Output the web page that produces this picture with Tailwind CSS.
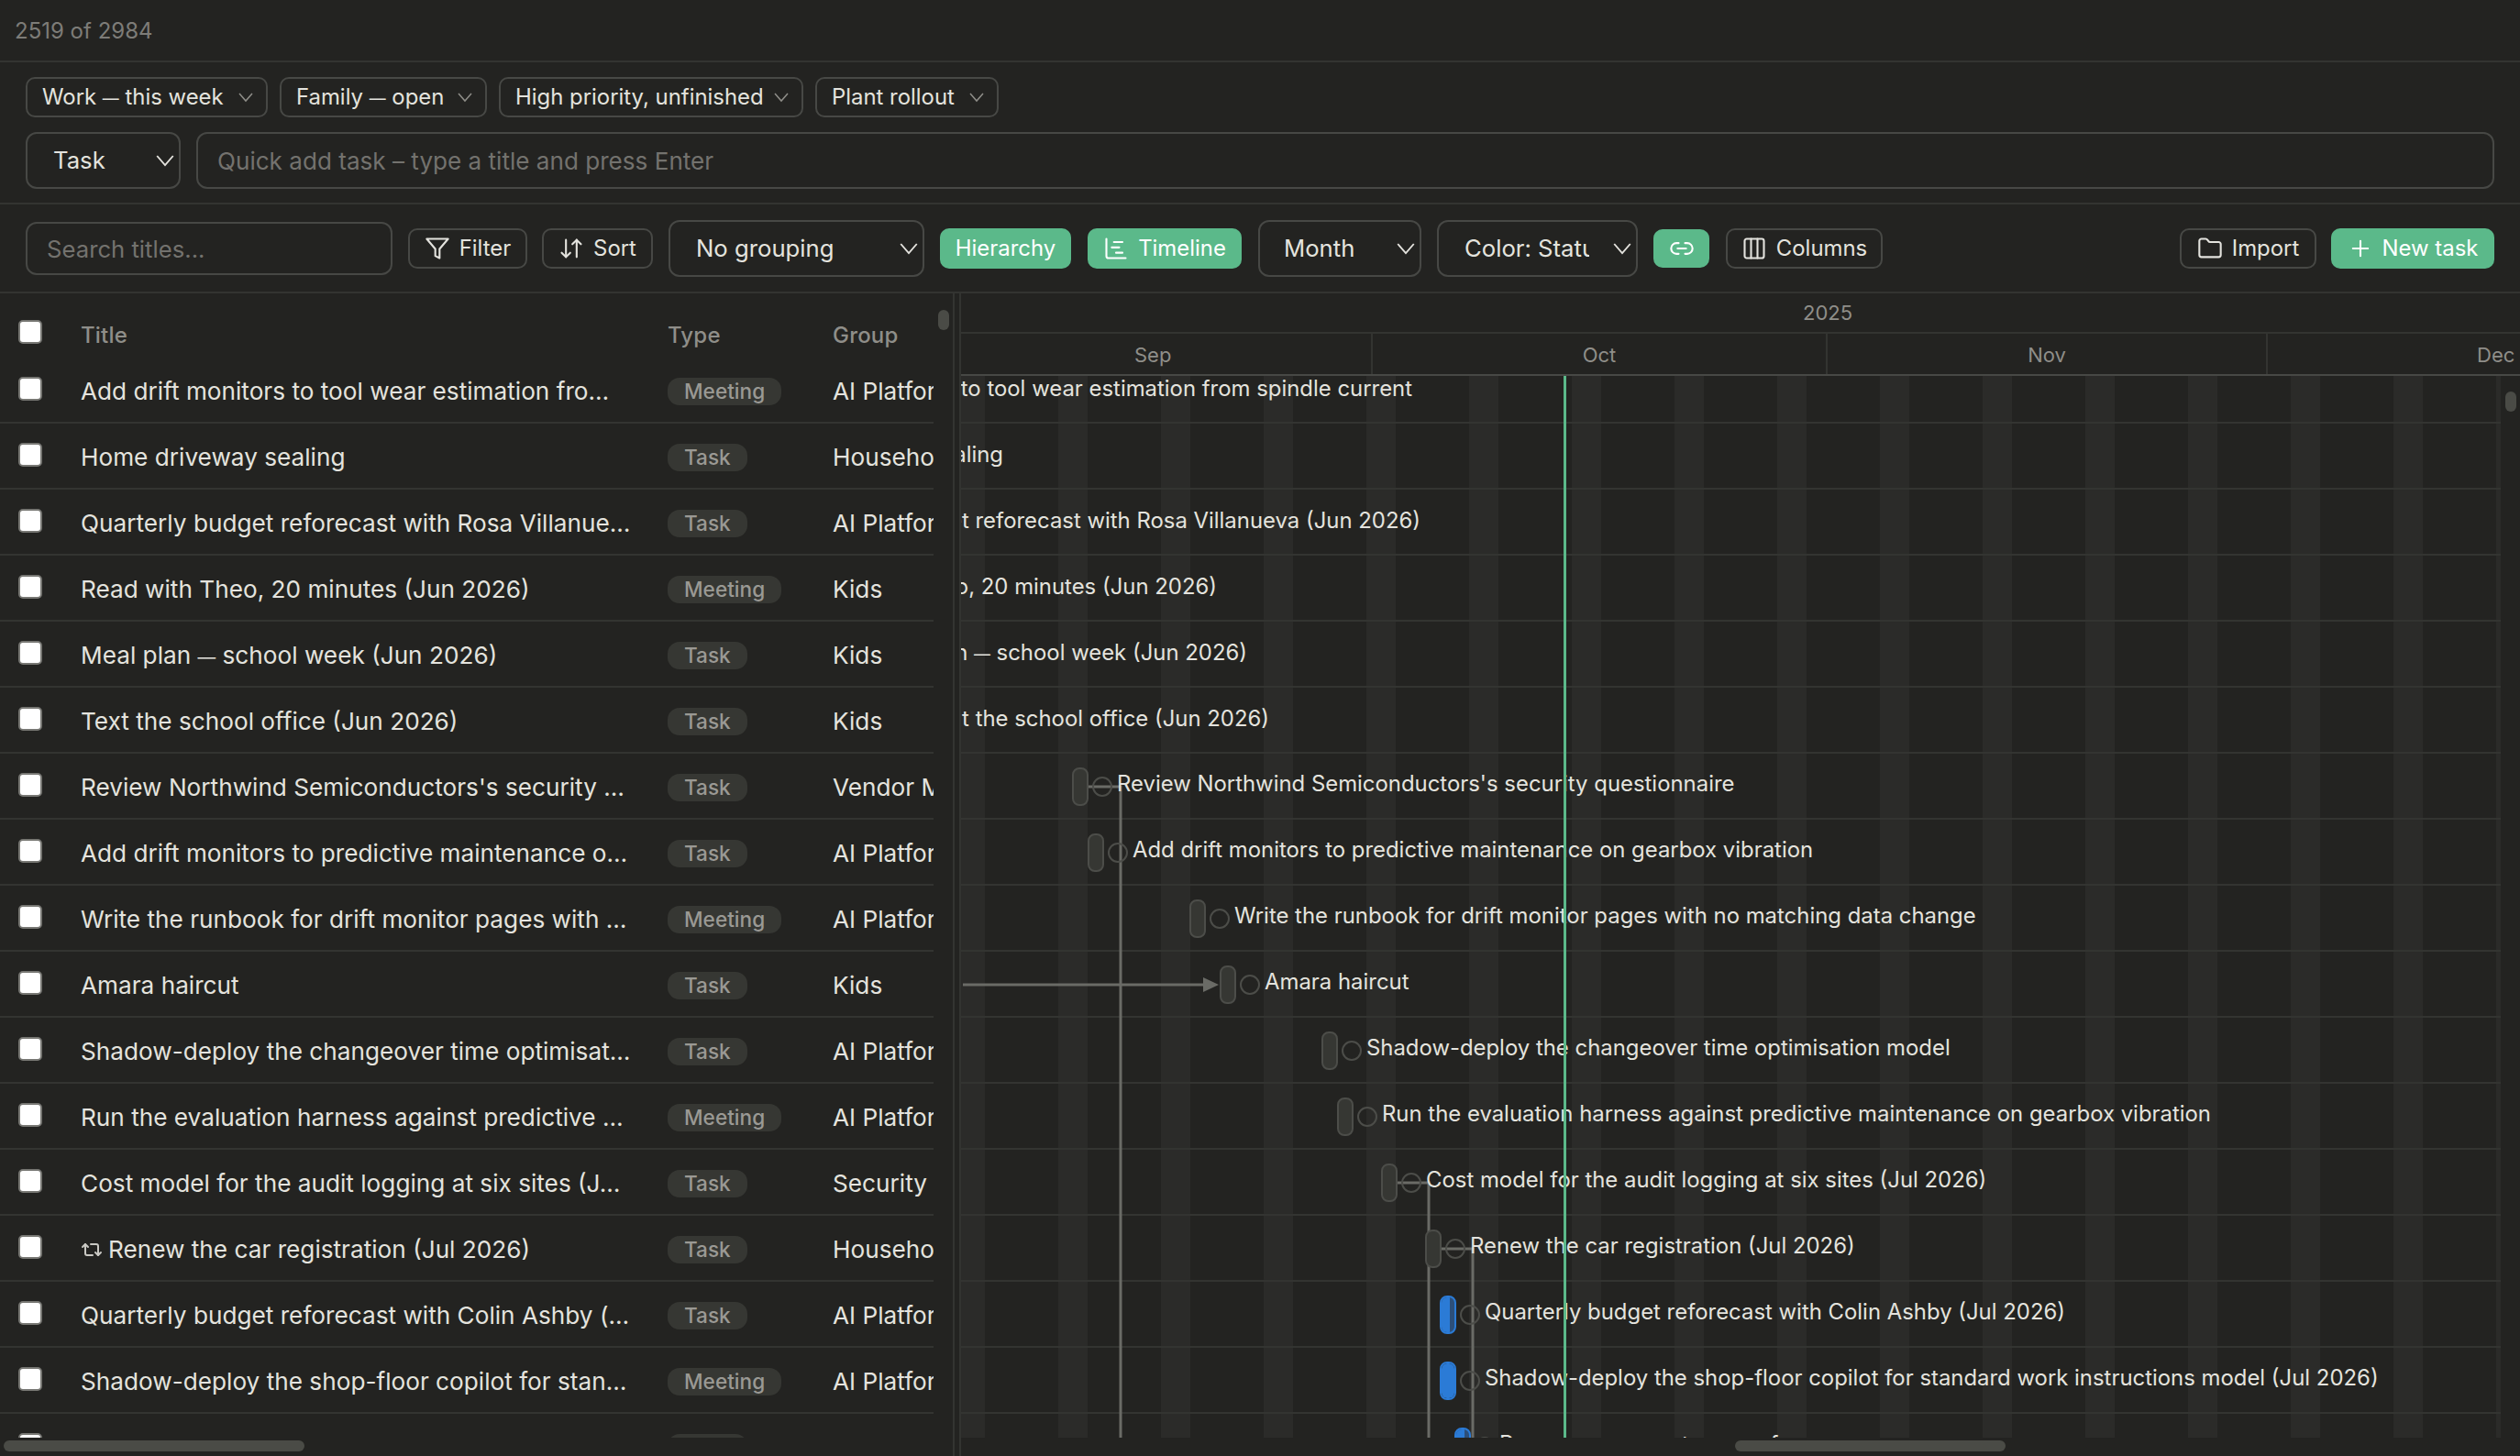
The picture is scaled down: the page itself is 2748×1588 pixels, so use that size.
<!DOCTYPE html>
<html lang="en">
<head>
<meta charset="UTF-8" />
<meta name="viewport" content="width=device-width, initial-scale=1.0" />
<title>Tasks</title>
<script src="https://cdn.jsdelivr.net/npm/@tailwindcss/browser@4"></script>
</head>
<body class="bg-[#232321] text-[#e4e3de] font-[family-name:Inter,sans-serif] h-[1588px] w-[2748px] overflow-hidden flex flex-col">

<!-- count -->
<div class="h-[68px] shrink-0 border-b-2 border-[#333431] pl-[16px] pt-[21px] text-[24px] leading-[26px] text-[#7d7c78]">2519 of 2984</div>

<!-- saved views + quick add -->
<div class="h-[155px] shrink-0 border-b-2 border-[#333431] px-[28px] pt-[16px]">
  <div class="flex gap-[13px]">
    <button class="h-[44px] w-[264px] flex items-center justify-between pl-[16px] pr-[10px] border-2 border-[#474845] rounded-[10px] text-[23.9px]"><span>Work <span class="text-[0.75em]">—</span> this week</span><svg class="w-[24px] h-[24px] text-[#8f8e89]" viewBox="0 0 24 24" fill="none" stroke="currentColor" stroke-width="1.5"><path d="m5 8 7 8 7-8"/></svg></button>
    <button class="h-[44px] w-[226px] flex items-center justify-between pl-[16px] pr-[10px] border-2 border-[#474845] rounded-[10px] text-[23.9px]"><span>Family <span class="text-[0.75em]">—</span> open</span><svg class="w-[24px] h-[24px] text-[#8f8e89]" viewBox="0 0 24 24" fill="none" stroke="currentColor" stroke-width="1.5"><path d="m5 8 7 8 7-8"/></svg></button>
    <button class="h-[44px] w-[332px] flex items-center justify-between pl-[16px] pr-[10px] border-2 border-[#474845] rounded-[10px] text-[23.9px]">High priority, unfinished<svg class="w-[24px] h-[24px] text-[#8f8e89]" viewBox="0 0 24 24" fill="none" stroke="currentColor" stroke-width="1.5"><path d="m5 8 7 8 7-8"/></svg></button>
    <button class="h-[44px] w-[200px] flex items-center justify-between pl-[16px] pr-[10px] border-2 border-[#474845] rounded-[10px] text-[23.9px]">Plant rollout<svg class="w-[24px] h-[24px] text-[#8f8e89]" viewBox="0 0 24 24" fill="none" stroke="currentColor" stroke-width="1.5"><path d="m5 8 7 8 7-8"/></svg></button>
  </div>
  <div class="flex gap-[17px] mt-[16px]">
    <div class="relative w-[169px] h-[62px] shrink-0">
      <select class="appearance-none w-full h-full bg-transparent border-2 border-[#474845] rounded-[12px] pl-[28px] pt-[1px] text-[25.7px]"><option>Task</option></select>
      <svg class="absolute right-[2px] top-[16px] w-[30px] h-[30px]" viewBox="0 0 24 24" fill="none" stroke="currentColor" stroke-width="1.5"><path d="m5 8 7 8 7-8"/></svg>
    </div>
    <input class="flex-1 h-[62px] bg-transparent border-2 border-[#474845] rounded-[12px] pl-[21px] text-[26.1px] placeholder:text-[#73726e]" placeholder="Quick add task – type a title and press Enter" />
  </div>
</div>

<!-- toolbar -->
<div class="h-[97px] shrink-0 border-b-2 border-[#333431] px-[28px] flex items-center">
  <input class="w-[400px] h-[58px] bg-transparent border-2 border-[#474845] rounded-[12px] pl-[21px] pt-[1px] text-[25.7px] placeholder:text-[#73726e]" placeholder="Search titles..." />
  <button class="ml-[17px] w-[130px] h-[44px] flex items-center justify-center gap-[10px] border-2 border-[#474845] rounded-[10px] text-[23.9px]"><svg class="w-[28px] h-[28px]" viewBox="0 0 24 24" fill="none" stroke="currentColor" stroke-width="1.8" stroke-linecap="round" stroke-linejoin="round"><polygon points="22 3 2 3 10 12.46 10 19 14 21 14 12.46 22 3"/></svg>Filter</button>
  <button class="ml-[16px] w-[121px] h-[44px] flex items-center justify-center gap-[10px] border-2 border-[#474845] rounded-[10px] text-[23.9px]"><svg class="w-[28px] h-[28px]" viewBox="0 0 24 24" fill="none" stroke="currentColor" stroke-width="1.8" stroke-linecap="round" stroke-linejoin="round"><path d="m3 16 4 4 4-4"/><path d="M7 20V4"/><path d="m21 8-4-4-4 4"/><path d="M17 4v16"/></svg>Sort</button>
  <div class="relative ml-[17px] w-[279px] h-[62px]">
    <select class="appearance-none w-full h-full bg-transparent border-2 border-[#474845] rounded-[12px] pl-[28px] pt-[1px] text-[25.7px]"><option>No grouping</option></select>
    <svg class="absolute right-[2px] top-[16px] w-[30px] h-[30px]" viewBox="0 0 24 24" fill="none" stroke="currentColor" stroke-width="1.5"><path d="m5 8 7 8 7-8"/></svg>
  </div>
  <button class="ml-[17px] w-[143px] h-[44px] rounded-[10px] bg-[#5bb98a] text-white text-[23.9px]">Hierarchy</button>
  <button class="ml-[18px] w-[168px] h-[44px] flex items-center justify-center gap-[10px] rounded-[10px] bg-[#5bb98a] text-white text-[23.9px]"><svg class="w-[28px] h-[28px]" viewBox="0 0 24 24" fill="none" stroke="currentColor" stroke-width="1.8" stroke-linecap="round" stroke-linejoin="round"><path d="M10 6h8"/><path d="M12 16h6"/><path d="M3 3v16a2 2 0 0 0 2 2h16"/><path d="M8 11h7"/></svg>Timeline</button>
  <div class="relative ml-[18px] w-[178px] h-[62px]">
    <select class="appearance-none w-full h-full bg-transparent border-2 border-[#474845] rounded-[12px] pl-[26px] pt-[1px] text-[25.7px]"><option>Month</option></select>
    <svg class="absolute right-[2px] top-[16px] w-[30px] h-[30px]" viewBox="0 0 24 24" fill="none" stroke="currentColor" stroke-width="1.5"><path d="m5 8 7 8 7-8"/></svg>
  </div>
  <div class="relative ml-[17px] w-[219px] h-[62px]">
    <select class="appearance-none w-full h-full bg-transparent border-2 border-[#474845] rounded-[12px] pl-[28px] pr-[51px] pt-[1px] text-[25.7px]"><option>Color: Status</option></select>
    <svg class="absolute right-[2px] top-[16px] w-[30px] h-[30px]" viewBox="0 0 24 24" fill="none" stroke="currentColor" stroke-width="1.5"><path d="m5 8 7 8 7-8"/></svg>
  </div>
  <button class="ml-[17px] w-[61px] h-[42px] flex items-center justify-center rounded-[10px] bg-[#5bb98a] text-white"><svg class="w-[28px] h-[28px]" viewBox="0 0 24 24" fill="none" stroke="currentColor" stroke-width="1.8" stroke-linecap="round" stroke-linejoin="round"><path d="M9 17H7A5 5 0 0 1 7 7h2"/><path d="M15 7h2a5 5 0 1 1 0 10h-2"/><line x1="8" x2="16" y1="12" y2="12"/></svg></button>
  <button class="ml-[18px] w-[171px] h-[44px] flex items-center justify-center gap-[10px] border-2 border-[#474845] rounded-[10px] text-[23.9px]"><svg class="w-[28px] h-[28px]" viewBox="0 0 24 24" fill="none" stroke="currentColor" stroke-width="1.8" stroke-linecap="round" stroke-linejoin="round"><rect width="18" height="18" x="3" y="3" rx="2"/><path d="M9 3v18"/><path d="M15 3v18"/></svg>Columns</button>
  <button class="ml-auto w-[149px] h-[44px] flex items-center justify-center gap-[10px] border-2 border-[#474845] rounded-[10px] text-[23.9px]"><svg class="w-[28px] h-[28px]" viewBox="0 0 24 24" fill="none" stroke="currentColor" stroke-width="1.8" stroke-linecap="round" stroke-linejoin="round"><path d="M20 20a2 2 0 0 0 2-2V8a2 2 0 0 0-2-2h-7.9a2 2 0 0 1-1.69-.9L9.6 3.9A2 2 0 0 0 7.93 3H4a2 2 0 0 0-2 2v13a2 2 0 0 0 2 2Z"/></svg>Import</button>
  <button class="ml-[16px] w-[178px] h-[44px] flex items-center justify-center gap-[10px] rounded-[10px] bg-[#5bb98a] text-white text-[23.9px]"><svg class="w-[28px] h-[28px]" viewBox="0 0 24 24" fill="none" stroke="currentColor" stroke-width="1.8" stroke-linecap="round" stroke-linejoin="round"><path d="M5 12h14"/><path d="M12 5v14"/></svg>New task</button>
</div>

<!-- table + gantt -->
<div class="flex-1 flex min-h-0">

  <!-- table pane -->
  <div class="relative w-[1041px] shrink-0 border-r-2 border-[#333431] flex flex-col">
    <div class="h-[70px] shrink-0 relative text-[24px] tracking-[0.2px] font-medium text-[#8f8e89]">
      <input type="checkbox" class="absolute left-[20px] top-[29px] appearance-none w-[26px] h-[26px] bg-white border-2 border-[#777773] rounded-[5px]" />
      <span class="absolute left-[88px] top-[28px]">Title</span>
      <span class="absolute left-[728px] top-[28px]">Type</span>
      <span class="absolute left-[908px] top-[28px]">Group</span>
    </div>
    <div id="tableRows" class="w-[1018px] flex-1 overflow-hidden"></div>
    <div class="h-[20px] shrink-0 pl-[4px] pt-[3px]"><div class="w-[328px] h-[12px] rounded-full bg-[#4a4b46]"></div></div>
    <div class="absolute left-[1023px] top-[18px] w-[12px] h-[22px] rounded-full bg-[#4a4b46]"></div>
  </div>

  <!-- resize handle -->
  <div class="w-[7px] shrink-0 border-r-2 border-[#333431]"></div>

  <!-- gantt pane -->
  <div class="relative flex-1 min-w-0 flex flex-col">
    <div class="h-[44px] shrink-0 border-b-2 border-[#333431] text-[22px] leading-[26px] pt-[8px] pl-[918px] text-[#8f8e89]">2025</div>
    <div class="h-[46px] shrink-0 border-b-2 border-[#474845] flex text-[22px] text-[#8f8e89] text-center">
      <div class="w-[449px] shrink-0 border-r-2 border-[#333431] pt-[7px] pl-[189px] text-left">Sep</div>
      <div class="w-[496px] shrink-0 border-r-2 border-[#333431] pt-[7px]">Oct</div>
      <div class="w-[480px] shrink-0 border-r-2 border-[#333431] pt-[7px]">Nov</div>
      <div class="flex-1 min-w-0 pt-[7px] pl-[228px] text-left whitespace-nowrap">Dec</div>
    </div>
    <div class="relative flex-1 min-h-0 flex">
      <div id="chart" class="relative w-[1679px] h-full overflow-hidden"></div>
    </div>
    <div class="h-[20px] shrink-0 pl-[844px] pt-[3px]"><div class="w-[295px] h-[12px] rounded-full bg-[#4a4b46]"></div></div>
    <div class="absolute left-[1684px] top-[107px] w-[12px] h-[22px] rounded-full bg-[#4a4b46]"></div>
  </div>
</div>

<script>
// title, type, group, bar x, label right edge when the bar is scrolled off, fill width
const ROWS = [
  {t:'Add drift monitors to tool wear estimation fro…', full:'Add drift monitors to tool wear estimation from spindle current', k:'Meeting', g:'AI Platform', end:1540},
  {t:'Home driveway sealing', full:'Home driveway sealing', k:'Task', g:'Household', end:1094},
  {t:'Quarterly budget reforecast with Rosa Villanue…', full:'Quarterly budget reforecast with Rosa Villanueva (Jun 2026)', k:'Task', g:'AI Platform', end:1549},
  {t:'Read with Theo, 20 minutes (Jun 2026)', full:'Read with Theo, 20 minutes (Jun 2026)', k:'Meeting', g:'Kids', end:1327},
  {t:'Meal plan — school week (Jun 2026)', full:'Meal plan — school week (Jun 2026)', k:'Task', g:'Kids', end:1360},
  {t:'Text the school office (Jun 2026)', full:'Text the school office (Jun 2026)', k:'Task', g:'Kids', end:1384},
  {t:'Review Northwind Semiconductors\'s security …', full:'Review Northwind Semiconductors\'s security questionnaire', k:'Task', g:'Vendor Management', bar:1169},
  {t:'Add drift monitors to predictive maintenance o…', full:'Add drift monitors to predictive maintenance on gearbox vibration', k:'Task', g:'AI Platform', bar:1186},
  {t:'Write the runbook for drift monitor pages with …', full:'Write the runbook for drift monitor pages with no matching data change', k:'Meeting', g:'AI Platform', bar:1297},
  {t:'Amara haircut', full:'Amara haircut', k:'Task', g:'Kids', bar:1330},
  {t:'Shadow-deploy the changeover time optimisat…', full:'Shadow-deploy the changeover time optimisation model', k:'Task', g:'AI Platform', bar:1441},
  {t:'Run the evaluation harness against predictive …', full:'Run the evaluation harness against predictive maintenance on gearbox vibration', k:'Meeting', g:'AI Platform', bar:1458},
  {t:'Cost model for the audit logging at six sites (J…', full:'Cost model for the audit logging at six sites (Jul 2026)', k:'Task', g:'Security & Compliance', bar:1506},
  {t:'Renew the car registration (Jul 2026)', full:'Renew the car registration (Jul 2026)', k:'Task', g:'Household', bar:1554, repeat:true},
  {t:'Quarterly budget reforecast with Colin Ashby (…', full:'Quarterly budget reforecast with Colin Ashby (Jul 2026)', k:'Task', g:'AI Platform', bar:1570, fill:9},
  {t:'Shadow-deploy the shop-floor copilot for stan…', full:'Shadow-deploy the shop-floor copilot for standard work instructions model (Jul 2026)', k:'Meeting', g:'AI Platform', bar:1570, fill:14},
  {t:'', full:'Prepare a mower tune-up for', k:'Task', g:'', bar:1586, fill:9},
];
const ROW_H = 72, CHART_X = 1048, CHART_Y = 410, ROWS_Y = 390;
const dash = s => s.replace('—', '<span class="text-[0.75em]">—</span>').replace('&', '&amp;');

const REPEAT = `<svg class="w-[24px] h-[24px] mr-[6px] shrink-0 text-[#c9c8c3]" viewBox="0 0 24 24" fill="none" stroke="currentColor" stroke-width="2" stroke-linecap="round" stroke-linejoin="round"><path d="m2 9 3-3 3 3"/><path d="M13 18H7a2 2 0 0 1-2-2V6"/><path d="m22 15-3 3-3-3"/><path d="M11 6h6a2 2 0 0 1 2 2v10"/></svg>`;

document.getElementById('tableRows').innerHTML = ROWS.map(r => `
  <div class="relative h-[72px] border-b-2 border-[#333431]">
    <input type="checkbox" class="absolute left-[20px] top-[21px] appearance-none w-[26px] h-[26px] bg-white border-2 border-[#777773] rounded-[5px]" />
    <div class="absolute left-[88px] top-[0px] w-[620px] h-[70px] flex items-center pt-[3px] text-[26.2px] whitespace-nowrap"><span class="contents">${r.repeat ? REPEAT : ''}</span><span>${dash(r.t)}</span></div>
    <div class="absolute left-[728px] top-[22px] h-[30px] px-[18px] rounded-[13px] bg-[#363733] text-[#9a9994] text-[22.6px] leading-[30px] font-medium">${r.k}</div>
    <div class="absolute left-[908px] top-[0px] w-[110px] h-[70px] flex items-center pt-[3px] text-[26.2px] whitespace-nowrap overflow-hidden">${dash(r.g)}</div>
  </div>`).join('');

// weekend stripes, every 7 days at 16px a day
let html = '';
for (let x = 1042; x < 2727; x += 112) {
  html += `<div class="absolute top-0 bottom-0 w-[32px] bg-[#2b2b29]" style="left:${x - CHART_X}px"></div>`;
}
ROWS.forEach((r, i) => {
  html += `<div class="absolute left-0 right-0 h-[2px] bg-[#333431]" style="top:${ROWS_Y + ROW_H * (i + 1) - 2 - CHART_Y}px"></div>`;
});

// dependency lines go under the bars
html += `<svg class="absolute left-0 top-0" width="1679" height="1179" fill="none" stroke="#6a6b66" stroke-width="3">
  <path d="M${1187-CHART_X} ${858-CHART_Y}H${1222-CHART_X}V1179"/>
  <path d="M2 ${1074-CHART_Y}H${1314-CHART_X}"/>
  <polygon points="${1312-CHART_X},${1066-CHART_Y} ${1329-CHART_X},${1074-CHART_Y} ${1312-CHART_X},${1082-CHART_Y}" fill="#6a6b66" stroke="none"/>
  <path d="M${1523-CHART_X} ${1290-CHART_Y}H${1558-CHART_X}V1179"/>
  <path d="M${1571-CHART_X} ${1362-CHART_Y}H${1606-CHART_X}V1179"/>
</svg>`;

ROWS.forEach((r, i) => {
  const cy = ROWS_Y + ROW_H * i + 36 - CHART_Y;
  if (r.end) {
    html += `<div class="absolute whitespace-nowrap text-[23.9px] leading-[30px]" style="right:${CHART_X + 1679 - r.end}px;top:${cy - 17}px">${dash(r.full)}</div>`;
    return;
  }
  const x = r.bar - CHART_X;
  if (r.fill) {
    html += `<div class="absolute w-[18px] h-[42px] rounded-[8px] border-2 border-[#2b7bd6] bg-[#2c4f7a] overflow-hidden" style="left:${x}px;top:${cy - 21}px"><div class="h-full bg-[#2b7bd6]" style="width:${r.fill}px"></div></div>`;
  } else {
    html += `<div class="absolute w-[18px] h-[42px] rounded-[8px] border-2 border-[#4c4d49] bg-[#363733]" style="left:${x}px;top:${cy - 21}px"></div>`;
  }
  html += `<div class="absolute w-[22px] h-[22px] rounded-full border-2 border-[#4c4d49]" style="left:${x + 22}px;top:${cy - 11}px"></div>`;
  html += `<div class="absolute whitespace-nowrap text-[23.9px] leading-[30px]" style="left:${x + 49}px;top:${cy - 18}px">${r.full}</div>`;
});

// today marker
html += `<div class="absolute top-0 bottom-0 w-[3px] bg-[#5bb98a]" style="left:${1705 - CHART_X}px"></div>`;
document.getElementById('chart').innerHTML = html;
</script>
</body>
</html>
